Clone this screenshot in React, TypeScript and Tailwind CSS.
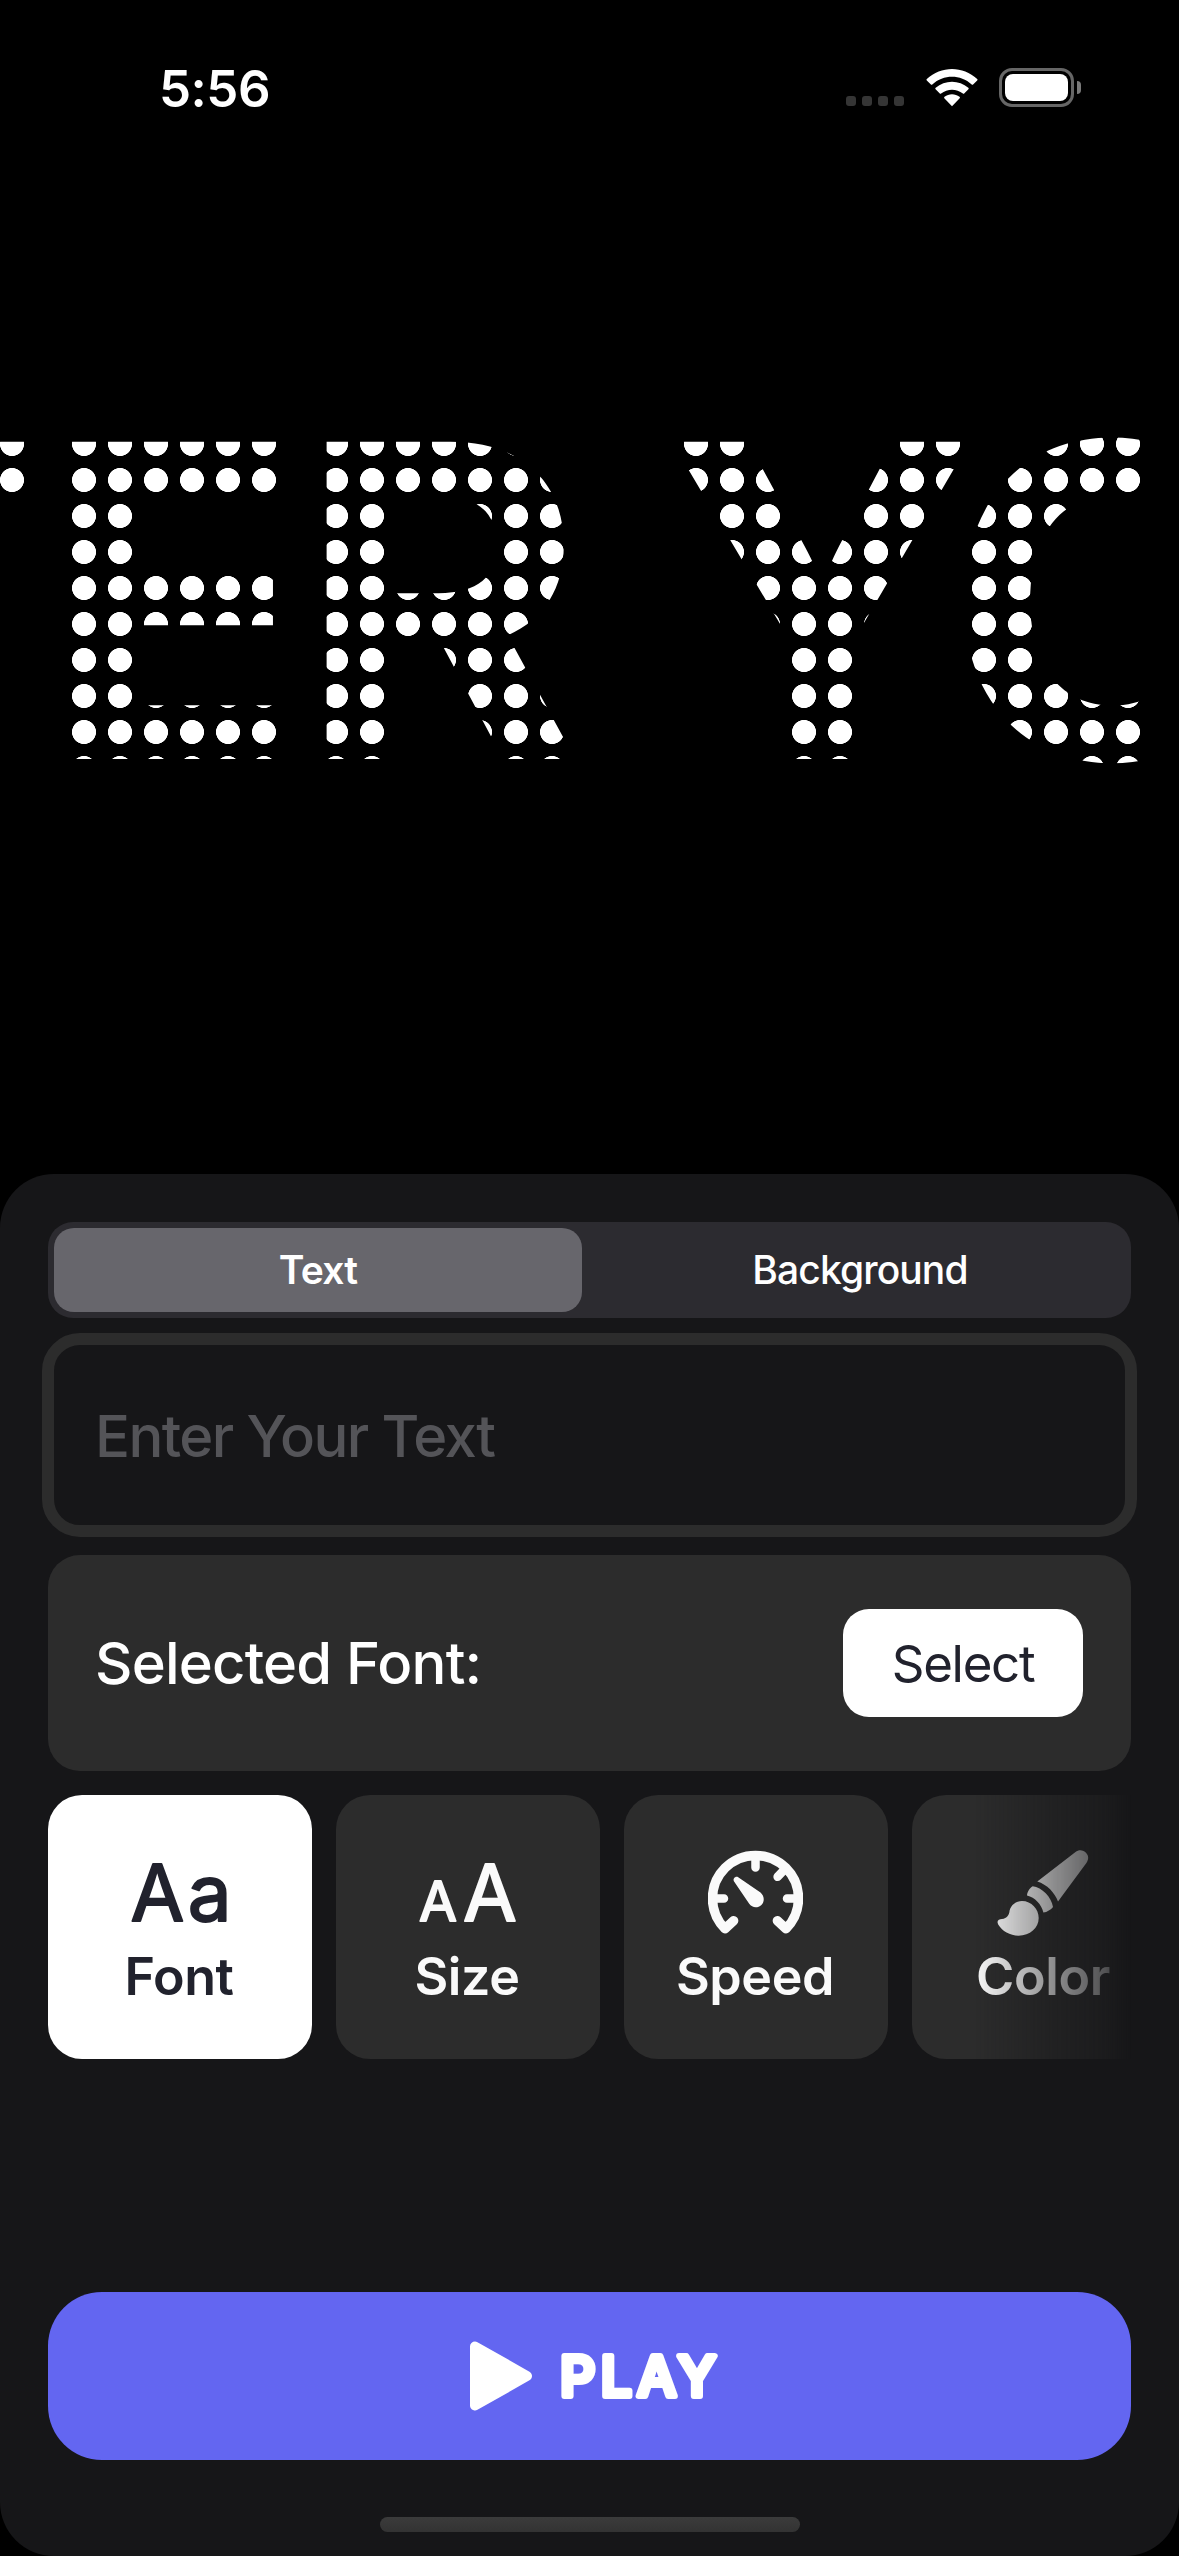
import { useState } from "react";

const GAUGE = (
  <svg viewBox="708 1850 95 86" className="h-[86px] w-[95px]" fill="none" stroke="currentColor" strokeLinecap="round" strokeLinejoin="round">
    <path strokeWidth="9.500" d="M733.6 1920.8 L725 1928.700 A43 43 0 1 1 786 1928.700 L777.4 1920.8" />
    <path strokeWidth="8.500" d="M755.5 1857V1867.500M714 1898.5H724M797 1898.5H787M785.5 1868.5L777.6 1876.8" />
    <path stroke="none" fill="currentColor" d="M733.900 1881.2C732.6 1878.500 735.6 1875.700 738.2 1877.200L760.5 1892.500C764.6 1896.300 764.8 1901.6 761.4 1905C757.8 1908.4 752 1908 749.2 1903.8Z" />
  </svg>
);

const BRUSH = (
  <svg viewBox="996 1850 92 86" className="h-[86px] w-[92px]" fill="currentColor">
    <path d="M1074.5 1852C1078 1849.4 1082.500 1850 1085.200 1853C1088 1856.200 1087.600 1859.500 1085.400 1863L1057 1901.600C1054 1893 1046 1884.500 1036.300 1881.600Z" />
    <path d="M1031.700 1886.300C1041 1887.500 1050.500 1897 1052 1907C1050 1909.500 1046 1912.300 1042.400 1912.600C1040.500 1904 1034 1897.500 1026 1895.400C1026.300 1892 1028.500 1888 1031.700 1886.300Z" />
    <path d="M1021 1901C1030.500 1901 1037.700 1909 1037.700 1918C1037.700 1928 1029 1935.700 1017.500 1935.700C1009 1935.700 1001 1931 997.200 1924.500C995.200 1920.500 998 1919 1001 1919C1006 1918.500 1008.200 1915 1008.600 1910.500C1010 1905 1015 1901 1021 1901Z" />
  </svg>
);

const FONT = (
  <svg viewBox="0 0 110 86" className="h-[86px] w-[110px] [font-family:Inter,sans-serif]" fill="currentColor" stroke="currentColor" strokeWidth="2" strokeLinejoin="round">
    <text x="6.500" y="71" fontSize="78" fontWeight="400" textLength="101">Aa</text>
  </svg>
);

const SIZE = (
  <svg viewBox="0 0 110 86" className="h-[86px] w-[110px] [font-family:Inter,sans-serif]" fill="currentColor" stroke="currentColor" strokeWidth="2" strokeLinejoin="round" fontWeight="400">
    <text x="7" y="71" fontSize="55">A</text>
    <text x="51" y="71" fontSize="78">A</text>
  </svg>
);

const TOOLS = [
  { name: "Font", icon: FONT },
  { name: "Size", icon: SIZE },
  { name: "Speed", icon: GAUGE },
  { name: "Color", icon: BRUSH },
];

function StatusBar() {
  return (
    <header className="flex h-[177px] items-start justify-between pl-[159px] pr-[98px] pt-[58px] text-white">
      <time className="text-[51px] font-semibold leading-[62px] tracking-[-0.5px]">5:56</time>
      <div className="mt-[10px] flex h-[39px] items-center">
        <div className="mt-[28px] flex gap-[6px] self-start">
          {[0, 1, 2, 3].map((n) => (
            <span key={n} className="size-[10px] rounded-[3px] bg-[#353535]" />
          ))}
        </div>
        <svg viewBox="0 0 52 39" className="ml-[22px] h-[39px] w-[52px]" fill="white">
          <path d="M26 38.200L18.300 30.300C17.900 29.800 18 29.200 18.500 28.800C22.800 25.300 29.200 25.300 33.500 28.800C34 29.200 34.100 29.800 33.700 30.300Z" />
          <path d="M13.800 25.500L9.600 21.300C9.200 20.900 9.200 20.200 9.700 19.800C18.900 11.800 33.100 11.800 42.300 19.800C42.800 20.200 42.800 20.900 42.400 21.300L38.200 25.500C37.800 25.900 37.300 25.900 36.900 25.600C30.600 20.400 21.400 20.400 15.100 25.600C14.700 25.900 14.200 25.900 13.800 25.500Z" />
          <path d="M4.900 16.500L.8 12.400C.4 12 .4 11.400 .8 11C15-2.400 37-2.400 51.200 11C51.600 11.400 51.600 12 51.200 12.400L47.100 16.500C46.700 16.900 46.100 16.900 45.700 16.500C34.500 6.200 17.500 6.200 6.300 16.500C5.900 16.900 5.300 16.900 4.900 16.500Z" />
        </svg>
        <div className="ml-[21px] h-[39px] w-[75px] rounded-[13px] border-[3px] border-[#666] p-[3px]">
          <div className="h-full rounded-[8px] bg-white" />
        </div>
        <span className="ml-[3px] h-[13px] w-[4px] rounded-r-full bg-[#7a7a7a]" />
      </div>
    </header>
  );
}

function Marquee() {
  return (
    <div className="h-[648px] w-[1152px] overflow-hidden [mask-image:radial-gradient(circle_at_12px_12px,#000_11.700px,transparent_12.300px)] [mask-size:36px_36px] [mask-position:0_3px]">
      <div className="ml-[-248px] flex whitespace-pre pt-[159px] text-[436px] font-bold leading-[529px] text-white">
        <span>T</span>
        <span>E</span>
        <span className="ml-[-10px]">R</span>
        <span className="ml-[-26px]"> </span>
        <span>Y</span>
        <span className="ml-[-36px]">O</span>
      </div>
    </div>
  );
}

export default function App() {
  const [tab, setTab] = useState("Text");
  const [tool, setTool] = useState("Font");
  return (
    <main className="flex h-[2556px] w-[1179px] flex-col overflow-hidden bg-black [font-family:Inter,sans-serif]">
      <StatusBar />
      <div className="h-[997px] shrink-0">
        <Marquee />
      </div>
      <section className="flex h-[1382px] shrink-0 flex-col rounded-[54px] bg-[#161618] px-[48px] pt-[48px]">
        <div className="flex h-[96px] shrink-0 gap-[9px] rounded-[25px] bg-[#2c2b30] p-[6px] text-[39px] text-white">
          {["Text", "Background"].map((name) => (
            <button
              key={name}
              onClick={() => setTab(name)}
              className={tab === name ? "w-[528px] rounded-[20px] bg-[#67666c] font-semibold tracking-[-0.8px]" : "flex-1 rounded-[20px] pl-[4px] font-medium tracking-[-0.9px]"}
            >
              {name}
            </button>
          ))}
        </div>
        <input
          placeholder="Enter Your Text"
          className="-mx-[6px] mt-[15px] h-[204px] shrink-0 rounded-[38px] border-[12px] border-[#2c2c2c] bg-transparent px-[41px] pt-[2px] text-[58px] font-medium tracking-[-1.6px] text-white outline-none placeholder:text-[#545458]"
        />
        <div className="mt-[18px] flex h-[216px] shrink-0 items-center justify-between rounded-[32px] bg-[#2c2c2c] px-[48px]">
          <span className="ml-[-1px] text-[58px] font-medium tracking-[-0.8px] text-white">Selected Font:</span>
          <button className="h-[108px] w-[240px] rounded-[26px] bg-white pt-[2px] text-[51px] tracking-[-1.3px] text-[#21222d]">Select</button>
        </div>
        <div className="mt-[24px] flex shrink-0 gap-[24px] overflow-hidden [mask-image:linear-gradient(to_right,#000_85.500%,rgba(0,0,0,0.53)_92.800%,rgba(0,0,0,0.27)_97.600%,transparent)]">
          {TOOLS.map(({ name, icon }) => (
            <button
              key={name}
              onClick={() => setTool(name)}
              className={
                "flex size-[264px] shrink-0 flex-col items-center rounded-[34px] pr-[2px] pt-[55px] " +
                (tool === name ? "bg-white text-[#21222d]" : "bg-[#2c2c2c] text-[#fafafa]")
              }
            >
              {icon}
              <span className="mt-[10px] text-[52px] font-semibold leading-[62px] tracking-[-0.4px]">{name}</span>
            </button>
          ))}
        </div>
        <button className="mt-[233px] flex h-[168px] shrink-0 items-center justify-center rounded-[54px] bg-[#6366f1] text-white">
          <svg viewBox="0 0 260 80" className="h-[80px] w-[260px] [font-family:Inter,sans-serif]" fill="white" stroke="white" strokeLinejoin="round">
            <path strokeWidth="10" d="M15 10.500L67 40L15 69.500Z" />
            <text x="100" y="60" fontSize="55" fontWeight="500" strokeWidth="6" textLength="156">PLAY</text>
          </svg>
        </button>
        <div className="mx-auto mt-[57px] h-[15px] w-[420px] shrink-0 rounded-full bg-linear-to-b from-[#3b3b3b] to-[#333]" />
      </section>
    </main>
  );
}
